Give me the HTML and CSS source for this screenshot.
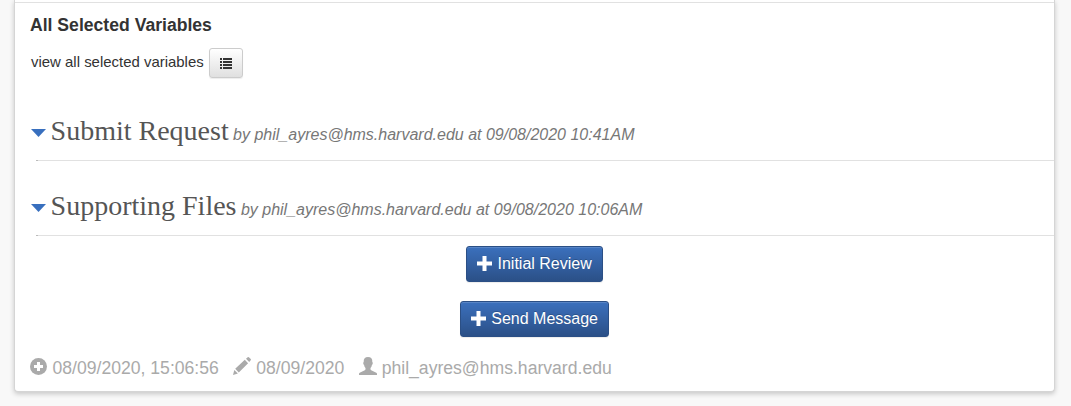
FILE: index.html
```html
<!DOCTYPE html>
<html lang="en">
<head>
<meta charset="utf-8">
<title>All Selected Variables</title>
<link rel="stylesheet" href="styles.css">
</head>
<body>
<main class="panel">
  <section class="variables">
    <h4 class="variables-title">All Selected Variables</h4>
    <div class="variables-row">
      <span>view all selected variables</span>
      <button class="btn-list" aria-label="View list">
        <svg width="12" height="11" viewBox="0 0 12 11" fill="#333"><path d="M0 0h2v2H0zM3 0h9v2H3zM0 3h2v2H0zM3 3h9v2H3zM0 6h2v2H0zM3 6h9v2H3zM0 9h2v2H0zM3 9h9v2H3z"/></svg>
      </button>
    </div>
  </section>
  <section class="entry">
    <h3 class="entry-head"><span class="caret"></span><span class="entry-name">Submit Request</span><em class="entry-by">by phil_ayres@hms.harvard.edu at 09/08/2020 10:41AM</em></h3>
  </section>
  <section class="entry">
    <h3 class="entry-head"><span class="caret"></span><span class="entry-name">Supporting Files</span><em class="entry-by">by phil_ayres@hms.harvard.edu at 09/08/2020 10:06AM</em></h3>
  </section>
  <div class="actions">
    <button class="btn-primary"><svg width="15" height="15" viewBox="0 0 15 15" fill="#fff"><path d="M5.5 0h4v5.5H15v4H9.500V15h-4V9.500H0v-4h5.500z"/></svg><span>Initial Review</span></button>
    <button class="btn-primary"><svg width="15" height="15" viewBox="0 0 15 15" fill="#fff"><path d="M5.5 0h4v5.5H15v4H9.500V15h-4V9.500H0v-4h5.500z"/></svg><span>Send Message</span></button>
  </div>
  <footer class="meta">
    <span class="meta-item"><svg class="icon-plus" width="17" height="17" viewBox="0 0 17 17"><circle cx="8.500" cy="8.500" r="8.500" fill="#aaa"/><path d="M7 4h3v3h3v3h-3v3H7v-3H4V7h3z" fill="#fff"/></svg><span>08/09/2020, 15:06:56</span></span>
    <span class="meta-item"><svg width="18" height="18" viewBox="0 0 18 18" fill="#aaa"><path d="M0 18l1.300-5L4.900 16.600zM2.200 11.700L11.800 2.800l3.300 3.400-9.300 9.400zM13 1.800L14.700.3q.6-.5 1.200 0l1.800 1.800q.5.600 0 1.200l-1.500 1.600z"/></svg><span>08/09/2020</span></span>
    <span class="meta-item"><svg width="18" height="18" viewBox="0 0 18 18" fill="#aaa"><path d="M0 18v-1.200q0-.7.700-1l5.100-2.600q.7-.4.700-1v-1.200Q5.300 9.700 5.100 7.900 4.200 7.300 4.200 5.900q0-.7.500-1C4.500 1.700 6 0 9 0s4.600 1.700 4.300 4.900q.5.300.5 1 0 1.400-.9 2-.2 1.800-1.400 3.100v1.200q0 .6.700 1l5.100 2.600q.7.300.7 1V18z"/></svg><span>phil_ayres@hms.harvard.edu</span></span>
  </footer>
</main>
</body>
</html>
```
FILE: styles.css
```css
* { box-sizing: border-box; }
body {
  margin: 0;
  height: 406px;
  overflow: hidden;
  background: #f8f8f8;
  font-family: "Liberation Sans", Arial, sans-serif;
  color: #333;
}
h3, h4 { margin: 0; font-weight: normal; }
svg { display: block; flex: none; }
button { font-family: inherit; margin: 0; }
.panel {
  width: 1041px;
  height: 392px;
  margin-left: 14px;
  background: #fff;
  border: 1px solid #d5d5d5;
  border-top: 0;
  border-radius: 0 0 4px 4px;
  box-shadow: 0 2px 5px rgba(0, 0, 0, .2);
  padding-top: 2px;
}
.variables {
  height: 84px;
  border-top: 1px solid #e1e1e1;
  padding: 11px 0 0 15px;
}
.variables-title {
  font-size: 17.6px;
  font-weight: bold;
  line-height: 22px;
}
.variables-row {
  display: flex;
  gap: 5px;
  margin: 12px 0 0 1px;
  font-size: 14.95px;
  line-height: 28px;
}
.btn-list {
  width: 34px;
  height: 30px;
  padding: 1px 0 0;
  display: flex;
  align-items: center;
  justify-content: center;
  border: 1px solid #ccc;
  border-radius: 3px;
  background: linear-gradient(#fff, #e0e0e0);
  box-shadow: inset 0 1px 0 rgba(255, 255, 255, .15), 0 1px 1px rgba(0, 0, 0, .075);
}
.entry {
  height: 75px;
  padding: 26px 0 0 16px;
}
.entry-head {
  display: flex;
  align-items: baseline;
  height: 49px;
  line-height: 38px;
  color: #555;
}
.entry::after {
  content: "";
  display: block;
  height: 1px;
  margin: -1px 0 0 5px;
  background: linear-gradient(90deg, #bbb 2px, #e1e1e1 2px);
}
.caret {
  width: 15px;
  height: 8px;
  margin: 17px 4.600px 0 0;
  align-self: flex-start;
  background: #386fbe;
  clip-path: polygon(0 0, 100% 0, 50% 100%);
}
.entry-name {
  font: 28px/38px "Liberation Serif", serif;
}
.entry-by {
  margin-left: 4.400px;
  font-size: 16px;
  color: #777;
}
.actions {
  display: flex;
  flex-direction: column;
  align-items: center;
  gap: 19px;
  padding-top: 10px;
}
.btn-primary {
  height: 36px;
  padding: 0 10.300px 0 10px;
  display: flex;
  align-items: center;
  gap: 5.600px;
  border: 1px solid #2b4f85;
  border-radius: 3px;
  background: linear-gradient(#3b70bd, #2b5087);
  box-shadow: inset 0 1px 0 rgba(255, 255, 255, .15), 0 1px 1px rgba(0, 0, 0, .075);
  color: #fff;
  font-size: 16px;
  line-height: 34px;
  text-shadow: 0 -1px 0 rgba(0, 0, 0, .2);
}
.btn-primary svg { margin-bottom: 2px; }
.meta {
  display: flex;
  gap: 14.400px;
  margin: 20px 0 0 15px;
  color: #aaa;
  font-size: 17.6px;
  line-height: 22px;
}
.meta-item { display: flex; gap: 5px; }
.meta-item .icon-plus { margin: 1px .5px 0 0; }
```
